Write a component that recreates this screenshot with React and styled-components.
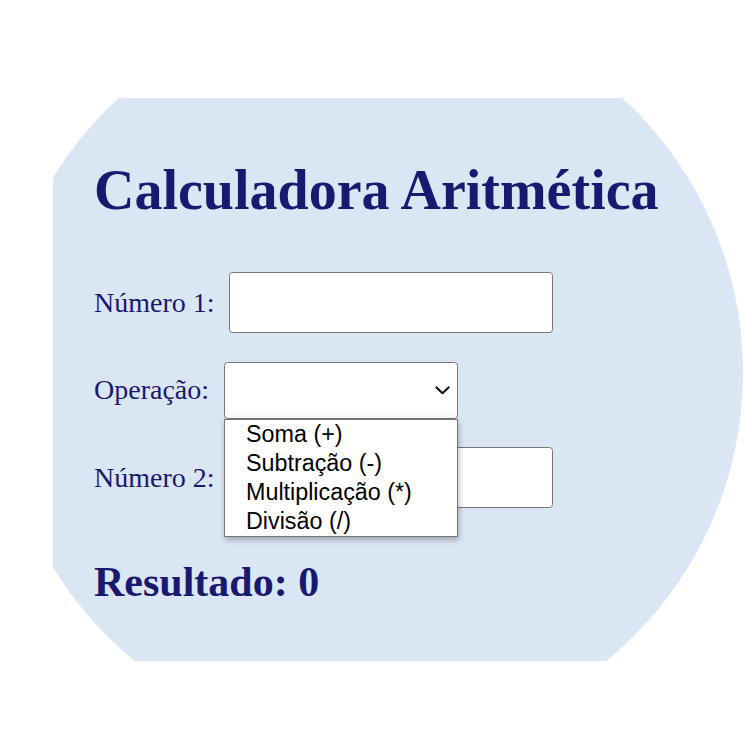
import React from "react";
import styled, { createGlobalStyle } from "styled-components";

const Global = createGlobalStyle`
  html, body { margin: 0; padding: 0; background: #ffffff; }
  body { font-family: "Liberation Serif", "Times New Roman", serif; }
`;

const Panel = styled.main`
  margin: 98px 0 0 53px;
  height: 563px;
  box-sizing: border-box;
  padding: 60px 0 0 41px;
  overflow: hidden;
  background: radial-gradient(
    circle 372.5px at 317.5px 274.5px,
    #dbe6f4 372px,
    rgba(219, 230, 244, 0) 373px
  );
  color: #191970;
`;

const Title = styled.h1`
  margin: 0 0 50px;
  font-family: "Liberation Serif", "Times New Roman", serif;
  font-size: 56px;
  font-weight: 700;
  line-height: normal;
  white-space: nowrap;
`;

const Form = styled.div`
  display: flex;
  flex-direction: column;
  gap: 28.5px;
`;

const Row = styled.div`
  display: flex;
  align-items: center;
  gap: 14px;
`;

const Label = styled.label`
  font-size: 28px;
  line-height: normal;
  color: #191970;
`;

const Input = styled.input`
  box-sizing: border-box;
  width: 324px;
  height: 61px;
  border: 1px solid #767676;
  border-radius: 3.5px;
  background: #ffffff;
  font-family: "Liberation Sans", Arial, sans-serif;
  font-size: 23px;
  padding: 2px 4px;
  outline: none;
`;

const SelectWrap = styled.div`
  position: relative;
  margin-left: 1px;
`;

const SelectBox = styled.div`
  box-sizing: border-box;
  width: 234px;
  height: 57px;
  border: 1px solid #767676;
  border-radius: 3.5px;
  background: linear-gradient(#ffffff 80%, #f7f7f7);
  display: flex;
  align-items: center;
  justify-content: flex-end;
  padding-right: 7px;
`;

const Dropdown = styled.ul`
  position: absolute;
  top: 100%;
  left: 0;
  z-index: 2;
  box-sizing: border-box;
  width: 234px;
  margin: 0;
  padding: 0;
  list-style: none;
  background: #ffffff;
  border: 1px solid #767676;
  box-shadow: 1px 3px 6px rgba(0, 0, 0, 0.28);
`;

const Option = styled.li`
  height: 29px;
  line-height: 29px;
  padding-left: 21px;
  font-family: "Liberation Sans", Arial, sans-serif;
  font-size: 23.3px;
  color: #000000;
  white-space: nowrap;
`;

const Result = styled.h2`
  margin: 50px 0 0;
  font-family: "Liberation Serif", "Times New Roman", serif;
  font-size: 42px;
  font-weight: 700;
  line-height: normal;
`;

const Chevron = () => (
  <svg width="15" height="9" viewBox="0 0 15 9" aria-hidden="true">
    <path d="M1.5 1.5 L7.5 7.2 L13.5 1.5" fill="none" stroke="#111" strokeWidth="2.2" strokeLinecap="round" strokeLinejoin="round" />
  </svg>
);

const options = ["Soma (+)", "Subtração (-)", "Multiplicação (*)", "Divisão (/)"];

export default function App() {
  return (
    <>
      <Global />
      <Panel>
        <Title>Calculadora Aritmética</Title>
        <Form>
          <Row>
            <Label htmlFor="n1">Número 1:</Label>
            <Input id="n1" type="text" />
          </Row>
          <Row>
            <Label>Operação:</Label>
            <SelectWrap>
              <SelectBox role="combobox" aria-expanded="true">
                <Chevron />
              </SelectBox>
              <Dropdown role="listbox">
                {options.map((o) => (
                  <Option key={o} role="option">{o}</Option>
                ))}
              </Dropdown>
            </SelectWrap>
          </Row>
          <Row>
            <Label htmlFor="n2">Número 2:</Label>
            <Input id="n2" type="text" />
          </Row>
        </Form>
        <Result>Resultado: 0</Result>
      </Panel>
    </>
  );
}
